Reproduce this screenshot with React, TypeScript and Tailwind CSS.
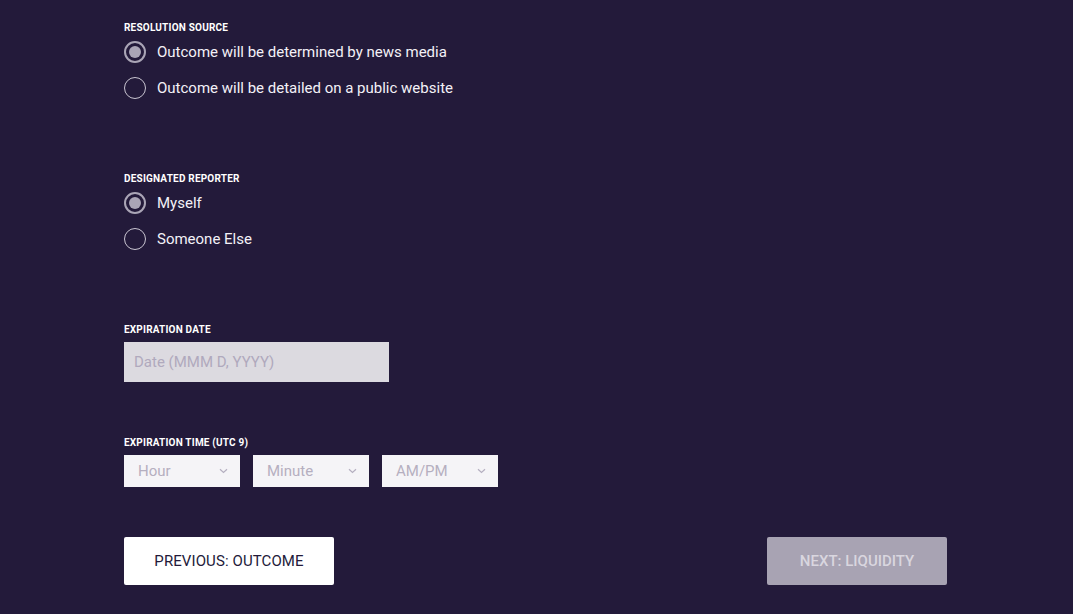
import React from "react";

const font = { fontFamily: "Roboto, 'Liberation Sans', sans-serif" };

function Radio({ checked, label }: { checked?: boolean; label: string }) {
  return (
    <div className="flex items-center h-[36px]">
      <div
        className={
          "w-[22px] h-[22px] rounded-full flex items-center justify-center " +
          (checked ? "border-2 border-[#aaa5b6]" : "border-[1.5px] border-[#c9c5d1]")
        }
      >
        {checked && <div className="w-[12px] h-[12px] rounded-full bg-[#aaa5b6]" />}
      </div>
      <span className="ml-[11px] text-[15px] text-[#f3f1f7] tracking-[0px]">{label}</span>
    </div>
  );
}

function Label({ children }: { children: React.ReactNode }) {
  return (
    <div className="text-[10px] font-bold text-white tracking-[0.2px] uppercase leading-none">
      {children}
    </div>
  );
}

function Select({ label }: { label: string }) {
  return (
    <div className="w-[116px] h-[32px] bg-[#f5f4f7] flex items-center justify-between pl-[14px] pr-[12px]">
      <span className="text-[15px] text-[#b5afc0]">{label}</span>
      <svg width="9" height="6" viewBox="0 0 9 6" fill="none">
        <path d="M1 1.2 L4.5 4.5 L8 1.2" stroke="#b5afc0" strokeWidth="1.2" />
      </svg>
    </div>
  );
}

export default function App() {
  return (
    <div className="w-[1073px] h-[614px] bg-[#231a3a] overflow-hidden" style={font}>
      <div className="pl-[124px] pr-[126px] pt-[23px] flex flex-col">
        <Label>Resolution Source</Label>
        <div className="mt-[1px] flex flex-col">
          <Radio checked label="Outcome will be determined by news media" />
          <Radio label="Outcome will be detailed on a public website" />
        </div>

        <div className="mt-[68px]">
          <Label>Designated Reporter</Label>
        </div>
        <div className="mt-[1px] flex flex-col">
          <Radio checked label="Myself" />
          <Radio label="Someone Else" />
        </div>

        <div className="mt-[68px]">
          <Label>Expiration Date</Label>
        </div>
        <div className="mt-[7px] w-[265px] h-[40px] bg-[#dcdae0] flex items-center pl-[10px]">
          <span className="text-[15px] text-[#b0a9bd]">Date (MMM D, YYYY)</span>
        </div>

        <div className="mt-[56px]">
          <Label>Expiration Time (UTC 9)</Label>
        </div>
        <div className="mt-[7px] flex gap-[13px]">
          <Select label="Hour" />
          <Select label="Minute" />
          <Select label="AM/PM" />
        </div>

        <div className="mt-[50px] flex justify-between">
          <button className="w-[210px] h-[48px] bg-white rounded-[2px] text-[15px] text-[#231a3a] tracking-[0.1px]">
            PREVIOUS: OUTCOME
          </button>
          <button className="w-[180px] h-[48px] bg-[#a8a3b3] rounded-[2px] text-[15px] font-medium text-[#d9d6df] tracking-[0px]">
            NEXT: LIQUIDITY
          </button>
        </div>
      </div>
    </div>
  );
}
